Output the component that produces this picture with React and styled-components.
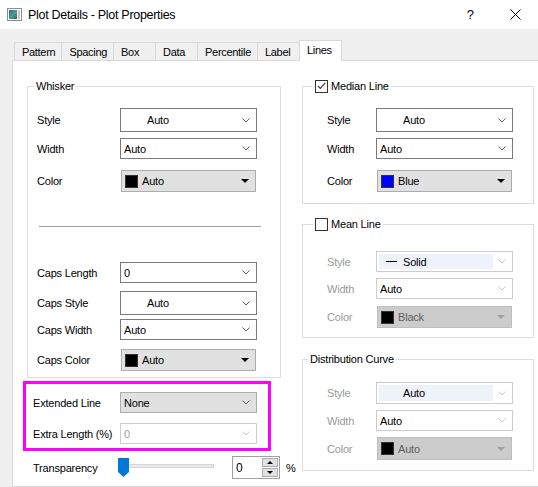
import styled, { createGlobalStyle } from "styled-components";

const GlobalStyle = createGlobalStyle`
  html, body {
    margin: 0;
    padding: 0;
    background: #f0f0f0;
  }

  body {
    font-family: "Liberation Sans", Arial, sans-serif;
    font-size: 11px;
    color: #000;
  }
`;

const Window = styled.div`
  display: flex;
  flex-direction: column;
  width: 538px;
  height: 487px;
  overflow: hidden;
  background: #f0f0f0;
`;

const TitleBar = styled.div`
  display: flex;
  flex: none;
  align-items: center;
  height: 29px;
  padding-left: 7px;
  background: #fff;
`;

const TitleText = styled.div`
  flex: 1;
  margin-left: 6px;
  font-size: 12.5px;
  letter-spacing: -0.3px;
`;

const HelpGlyph = styled.span`
  font-size: 13px;
`;

const CloseIcon = styled.svg`
  flex: none;
  margin: 0 17px 0 36px;
`;

const Body = styled.div`
  display: flex;
  flex: 1;
  flex-direction: column;
  min-height: 0;
  padding-top: 13px;
`;

const TabStrip = styled.div`
  position: relative;
  z-index: 1;
  display: flex;
  flex: none;
  align-items: flex-end;
  height: 18px;
  padding-left: 15px;
`;

const Tab = styled.div`
  box-sizing: border-box;
  display: flex;
  align-items: center;
  min-width: 43px;
  height: ${({ $active }) => ($active ? "21px" : "18px")};
  margin: 0 0 ${({ $active }) => ($active ? "-1px" : "0")} -1px;
  padding: 0 6px ${({ $active }) => ($active ? "3px" : "0")} 7px;
  border: 1px solid #d9d9d9;
  border-bottom: none;
  background: ${({ $active }) => ($active ? "#fff" : "#f0f0f0")};
  font-size: 11px;
  letter-spacing: -0.3px;
`;

const Panel = styled.div`
  display: grid;
  flex: 1;
  grid-template-columns: 289px 232px;
  align-content: start;
  width: 540px;
  margin-left: 12px;
  border: 1px solid #d9d9d9;
  background: #fff;
`;

const LeftColumn = styled.div`
  display: flex;
  flex-direction: column;
  align-items: flex-start;
  padding: 18px 0 0 10px;
`;

const RightColumn = styled.div`
  display: flex;
  flex-direction: column;
  padding-top: 18px;
`;

const Group = styled.fieldset`
  box-sizing: border-box;
  width: ${({ $w }) => $w}px;
  min-width: 0;
  margin: ${({ $mt = 0 }) => $mt}px 0 0 ${({ $ml = 0 }) => $ml}px;
  padding: 0;
  border: 1px solid #dcdcdc;
`;

const Legend = styled.legend`
  height: 14px;
  margin-left: ${({ $ml }) => $ml}px;
  padding: 0 2px;
  line-height: 14px;
  font-size: 11px;
  letter-spacing: -0.2px;
`;

const LegendInner = styled.span`
  display: inline-flex;
  align-items: center;
  gap: 3px;
  height: 14px;
`;

const CheckBox = styled.span`
  box-sizing: border-box;
  display: inline-flex;
  align-items: center;
  justify-content: center;
  width: 13px;
  height: 13px;
  border: 1px solid #333;
  background: #fff;
`;

const GroupBody = styled.div`
  display: flex;
  flex-direction: column;
  padding: ${({ $pt }) => $pt}px 0 ${({ $pb }) => $pb}px ${({ $pl }) => $pl}px;
`;

const Row = styled.div`
  display: flex;
  align-items: center;
  height: ${({ $h = 21 }) => $h}px;
  margin-top: ${({ $mt = 0 }) => $mt}px;
`;

const Label = styled.span`
  flex: none;
  width: ${({ $w }) => $w}px;
  color: ${({ $disabled }) => ($disabled ? "#9a9a9a" : "#000")};
  letter-spacing: -0.2px;
`;

const Separator = styled.div`
  width: 222px;
  height: 1px;
  margin: ${({ $mt }) => $mt}px 0 0 2px;
  background: #a0a0a0;
`;

const tones = {
  normal: { border: "#7a7a7a", background: "#fff" },
  filled: { border: "#adadad", background: "#e1e1e1" },
  disabled: { border: "#cccccc", background: "#fff" },
  disabledFilled: { border: "#bfbfbf", background: "#cccccc" },
};

const Combo = styled.div`
  box-sizing: border-box;
  display: flex;
  flex: none;
  align-items: center;
  width: ${({ $w = 137 }) => $w}px;
  height: 100%;
  margin-left: ${({ $ml = 0 }) => $ml}px;
  padding: ${({ $inset = 0 }) => `${$inset}px 6px ${$inset}px ${$inset}px`};
  border: 1px solid ${({ $tone = "normal" }) => tones[$tone].border};
  background: ${({ $tone = "normal" }) => tones[$tone].background};
`;

const ComboValue = styled.span`
  padding-left: ${({ $indent = 3 }) => $indent}px;
  color: ${({ $color = "#000" }) => $color};
  letter-spacing: -0.2px;
  white-space: nowrap;
`;

const Swatch = styled.span`
  box-sizing: border-box;
  flex: none;
  width: 13px;
  height: 13px;
  margin: 0 4px 0 3px;
  border: 1px solid #333;
  background: ${({ $color }) => $color};
`;

const LineStyleArea = styled.div`
  box-sizing: border-box;
  display: flex;
  align-items: center;
  gap: 6px;
  align-self: stretch;
  width: 114px;
  padding-left: ${({ $indent }) => $indent}px;
  background: #eef2fa;
  letter-spacing: -0.2px;
`;

const ArrowIcon = styled.svg`
  flex: none;
  margin-left: auto;
`;

const MarkedArea = styled.div`
  box-sizing: border-box;
  display: flex;
  flex-direction: column;
  width: 248px;
  margin-top: 3px;
  padding: 8px 0 4px 7px;
  border: 3px solid #ff00ff;
`;

const TransparencyRow = styled.div`
  display: flex;
  align-items: center;
  height: 23px;
  margin: 5px 0 0 10px;
`;

const Slider = styled.div`
  position: relative;
  display: flex;
  flex: none;
  align-items: flex-start;
  width: 96px;
  height: 23px;
`;

const SliderTrack = styled.div`
  box-sizing: border-box;
  flex: 1;
  height: 4px;
  margin: 8px 0 0 6px;
  border: 1px solid #d6d6d6;
  background: #e7eaea;
`;

const SliderThumb = styled.svg`
  position: absolute;
  top: 2px;
  left: 0;
`;

const SpinBox = styled.div`
  box-sizing: border-box;
  display: flex;
  flex: none;
  width: 48px;
  height: 23px;
  margin-left: 18px;
  border: 1px solid #a0a0a0;
  background: #fff;
`;

const SpinValue = styled.span`
  display: flex;
  flex: 1;
  align-items: center;
  padding-left: 3px;
  font-size: 12px;
`;

const SpinButtons = styled.div`
  display: flex;
  flex-direction: column;
  gap: 1px;
  width: 16px;
  padding: 1px 1px 1px 0;
`;

const SpinButton = styled.div`
  display: flex;
  flex: 1;
  align-items: center;
  justify-content: center;
  border: 1px solid #adadad;
  background: #e1e1e1;
`;

const Unit = styled.span`
  margin-left: 6px;
`;

const TABS = ["Pattern", "Spacing", "Box", "Data", "Percentile", "Label", "Lines"];

function Chevron({ muted }) {
  return (
    <ArrowIcon width="8" height="5" viewBox="0 0 8 5">
      <polyline
        points="0.5,0.5 4,4 7.5,0.5"
        fill="none"
        stroke={muted ? "#c8c8c8" : "#606060"}
        strokeWidth="1"
      />
    </ArrowIcon>
  );
}

function DropTriangle({ muted }) {
  return (
    <ArrowIcon width="8" height="4" viewBox="0 0 8 4">
      <polygon points="0,0 8,0 4,4" fill={muted ? "#a0a0a0" : "#000"} />
    </ArrowIcon>
  );
}

function ListCombo({ value, indent = 3, tone = "normal", color, muted }) {
  return (
    <Combo $tone={tone}>
      <ComboValue $indent={indent} $color={color}>
        {value}
      </ComboValue>
      <Chevron muted={muted} />
    </Combo>
  );
}

function ColorCombo({ swatch, name, disabled }) {
  return (
    <Combo $tone={disabled ? "disabledFilled" : "filled"} $w={135} $ml={1}>
      <Swatch $color={swatch} />
      <ComboValue $indent={0} $color={disabled ? "#606060" : "#000"}>
        {name}
      </ComboValue>
      <DropTriangle muted={disabled} />
    </Combo>
  );
}

function LineStyleCombo({ value, indent, withLine }) {
  return (
    <Combo $tone="disabled" $inset={2}>
      <LineStyleArea $indent={indent}>
        {withLine && (
          <svg width="11" height="1" viewBox="0 0 11 1">
            <rect width="11" height="1" fill="#000" />
          </svg>
        )}
        <span>{value}</span>
      </LineStyleArea>
      <Chevron muted />
    </Combo>
  );
}

function Check({ checked }) {
  return (
    <CheckBox>
      {checked && (
        <svg width="9" height="8" viewBox="0 0 9 8">
          <polyline points="0.8,3.8 3.3,6.4 8.3,0.9" fill="none" stroke="#333" strokeWidth="1.1" />
        </svg>
      )}
    </CheckBox>
  );
}

export default function App() {
  return (
    <>
      <GlobalStyle />
      <Window>
        <TitleBar>
          <svg width="15" height="13" viewBox="0 0 15 13">
            <defs>
              <linearGradient id="titleIcon" x1="0" y1="0" x2="1" y2="1">
                <stop offset="0" stopColor="#2a5f8f" />
                <stop offset="0.5" stopColor="#4f9e92" />
                <stop offset="1" stopColor="#2d6a5a" />
              </linearGradient>
            </defs>
            <rect x="0.5" y="0.5" width="14" height="12" fill="#fff" stroke="#8c8c8c" />
            <rect x="2" y="2" width="8" height="9" fill="url(#titleIcon)" />
            <rect x="11" y="2" width="2" height="9" fill="#c9c9c9" />
          </svg>
          <TitleText>Plot Details - Plot Properties</TitleText>
          <HelpGlyph>?</HelpGlyph>
          <CloseIcon width="11" height="11" viewBox="0 0 11 11">
            <path d="M0.5 0.5 L10.5 10.5 M10.5 0.5 L0.5 10.5" stroke="#000" strokeWidth="1" />
          </CloseIcon>
        </TitleBar>

        <Body>
          <TabStrip>
            {TABS.map((tab) => (
              <Tab key={tab} $active={tab === "Lines"}>
                {tab}
              </Tab>
            ))}
          </TabStrip>

          <Panel>
            <LeftColumn>
              <Group $w={254} $ml={4}>
                <Legend $ml={6}>Whisker</Legend>
                <GroupBody $pt={15} $pb={6} $pl={9}>
                  <Row $h={24}>
                    <Label $w={83}>Style</Label>
                    <ListCombo value="Auto" indent={26} />
                  </Row>
                  <Row $mt={6}>
                    <Label $w={83}>Width</Label>
                    <ListCombo value="Auto" />
                  </Row>
                  <Row $mt={11} $h={22}>
                    <Label $w={83}>Color</Label>
                    <ColorCombo swatch="#000" name="Auto" />
                  </Row>
                  <Separator $mt={34} />
                  <Row $mt={35}>
                    <Label $w={83}>Caps Length</Label>
                    <ListCombo value="0" />
                  </Row>
                  <Row $mt={8} $h={24}>
                    <Label $w={83}>Caps Style</Label>
                    <ListCombo value="Auto" indent={26} />
                  </Row>
                  <Row $mt={4}>
                    <Label $w={83}>Caps Width</Label>
                    <ListCombo value="Auto" />
                  </Row>
                  <Row $mt={9} $h={22}>
                    <Label $w={83}>Caps Color</Label>
                    <ColorCombo swatch="#000" name="Auto" />
                  </Row>
                </GroupBody>
              </Group>

              <MarkedArea>
                <Row>
                  <Label $w={87}>Extended Line</Label>
                  <ListCombo value="None" tone="filled" />
                </Row>
                <Row $mt={10}>
                  <Label $w={87}>Extra Length (%)</Label>
                  <ListCombo value="0" tone="disabled" color="#a0a0a0" muted />
                </Row>
              </MarkedArea>

              <TransparencyRow>
                <Label $w={85}>Transparency</Label>
                <Slider>
                  <SliderTrack />
                  <SliderThumb width="11" height="19" viewBox="0 0 11 19">
                    <path d="M0 0 H11 V14 L5.5 19 L0 14 Z" fill="#0078d7" />
                  </SliderThumb>
                </Slider>
                <SpinBox>
                  <SpinValue>0</SpinValue>
                  <SpinButtons>
                    <SpinButton>
                      <svg width="6" height="3" viewBox="0 0 6 3">
                        <polygon points="0,3 6,3 3,0" fill="#000" />
                      </svg>
                    </SpinButton>
                    <SpinButton>
                      <svg width="6" height="3" viewBox="0 0 6 3">
                        <polygon points="0,0 6,0 3,3" fill="#000" />
                      </svg>
                    </SpinButton>
                  </SpinButtons>
                </SpinBox>
                <Unit>%</Unit>
              </TransparencyRow>
            </LeftColumn>

            <RightColumn>
              <Group $w={232}>
                <Legend $ml={10}>
                  <LegendInner>
                    <Check checked />
                    Median Line
                  </LegendInner>
                </Legend>
                <GroupBody $pt={15} $pb={11} $pl={24}>
                  <Row $h={24}>
                    <Label $w={49}>Style</Label>
                    <ListCombo value="Auto" indent={26} />
                  </Row>
                  <Row $mt={6}>
                    <Label $w={49}>Width</Label>
                    <ListCombo value="Auto" />
                  </Row>
                  <Row $mt={11} $h={22}>
                    <Label $w={49}>Color</Label>
                    <ColorCombo swatch="#0000ff" name="Blue" />
                  </Row>
                </GroupBody>
              </Group>

              <Group $w={232} $mt={13}>
                <Legend $ml={10}>
                  <LegendInner>
                    <Check />
                    Mean Line
                  </LegendInner>
                </Legend>
                <GroupBody $pt={20} $pb={9} $pl={24}>
                  <Row>
                    <Label $w={49} $disabled>Style</Label>
                    <LineStyleCombo value="Solid" indent={7} withLine />
                  </Row>
                  <Row $mt={6}>
                    <Label $w={49} $disabled>Width</Label>
                    <ListCombo value="Auto" tone="disabled" muted />
                  </Row>
                  <Row $mt={7} $h={22}>
                    <Label $w={49} $disabled>Color</Label>
                    <ColorCombo swatch="#000" name="Black" disabled />
                  </Row>
                </GroupBody>
              </Group>

              <Group $w={232} $mt={14}>
                <Legend $ml={5}>Distribution Curve</Legend>
                <GroupBody $pt={16} $pb={10} $pl={24}>
                  <Row $h={22}>
                    <Label $w={49} $disabled>Style</Label>
                    <LineStyleCombo value="Auto" indent={24} />
                  </Row>
                  <Row $mt={6}>
                    <Label $w={49} $disabled>Width</Label>
                    <ListCombo value="Auto" tone="disabled" muted />
                  </Row>
                  <Row $mt={6} $h={23}>
                    <Label $w={49} $disabled>Color</Label>
                    <ColorCombo swatch="#000" name="Auto" disabled />
                  </Row>
                </GroupBody>
              </Group>
            </RightColumn>
          </Panel>
        </Body>
      </Window>
    </>
  );
}
